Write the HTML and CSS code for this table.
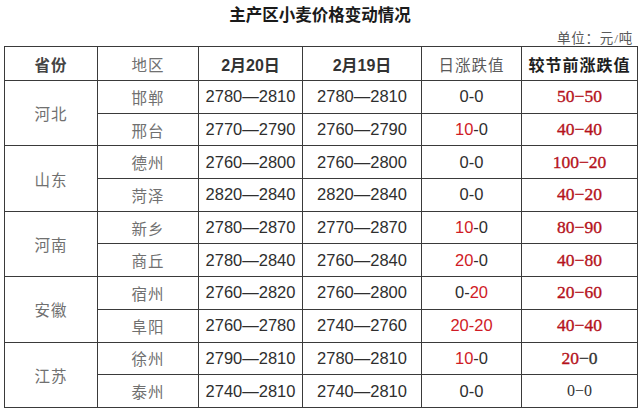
FILE: index.html
```html
<!DOCTYPE html>
<html lang="zh">
<head>
<meta charset="utf-8">
<link rel="stylesheet" href="styles.css">
</head>
<body>
<div class="page">
  <div class="title">主产区小麦价格变动情况</div>
  <div class="unit">单位：元/吨</div>
  <table class="grid">
    <colgroup>
      <col class="c1"><col class="c2"><col class="c3"><col class="c4"><col class="c5"><col class="c6">
    </colgroup>
    <thead>
      <tr class="head">
        <th class="cn bold">省份</th>
        <th class="cn">地区</th>
        <th class="num bold">2月20日</th>
        <th class="num bold">2月19日</th>
        <th class="cn light">日涨跌值</th>
        <th class="cn bold dark">较节前涨跌值</th>
      </tr>
    </thead>
    <tbody>
      <tr>
        <td class="cn prov" rowspan="2">河北</td>
        <td class="cn">邯郸</td>
        <td class="num">2780—2810</td>
        <td class="num">2780—2810</td>
        <td class="num">0-0</td>
        <td class="ser red">50−50</td>
      </tr>
      <tr>
        <td class="cn">邢台</td>
        <td class="num">2770—2790</td>
        <td class="num">2760—2790</td>
        <td class="num"><span class="r">10</span>-0</td>
        <td class="ser red">40−40</td>
      </tr>
      <tr>
        <td class="cn prov" rowspan="2">山东</td>
        <td class="cn">德州</td>
        <td class="num">2760—2800</td>
        <td class="num">2760—2800</td>
        <td class="num">0-0</td>
        <td class="ser red">100−20</td>
      </tr>
      <tr>
        <td class="cn">菏泽</td>
        <td class="num">2820—2840</td>
        <td class="num">2820—2840</td>
        <td class="num">0-0</td>
        <td class="ser red">40−20</td>
      </tr>
      <tr>
        <td class="cn prov" rowspan="2">河南</td>
        <td class="cn">新乡</td>
        <td class="num">2780—2870</td>
        <td class="num">2770—2870</td>
        <td class="num"><span class="r">10</span>-0</td>
        <td class="ser red">80−90</td>
      </tr>
      <tr>
        <td class="cn">商丘</td>
        <td class="num">2780—2840</td>
        <td class="num">2760—2840</td>
        <td class="num"><span class="r">20</span>-0</td>
        <td class="ser red">40−80</td>
      </tr>
      <tr>
        <td class="cn prov" rowspan="2">安徽</td>
        <td class="cn">宿州</td>
        <td class="num">2760—2820</td>
        <td class="num">2760—2800</td>
        <td class="num">0-<span class="r">20</span></td>
        <td class="ser red">20−60</td>
      </tr>
      <tr>
        <td class="cn">阜阳</td>
        <td class="num">2760—2780</td>
        <td class="num">2740—2760</td>
        <td class="num"><span class="r">20-20</span></td>
        <td class="ser red">40−40</td>
      </tr>
      <tr>
        <td class="cn prov" rowspan="2">江苏</td>
        <td class="cn">徐州</td>
        <td class="num">2790—2810</td>
        <td class="num">2780—2810</td>
        <td class="num"><span class="r">10</span>-0</td>
        <td class="ser"><span class="r2">20</span>−0</td>
      </tr>
      <tr>
        <td class="cn">泰州</td>
        <td class="num">2740—2810</td>
        <td class="num">2740—2810</td>
        <td class="num">0-0</td>
        <td class="ser small">0−0</td>
      </tr>
    </tbody>
  </table>
</div>
</body>
</html>
```

FILE: styles.css
```css
html, body {
  margin: 0;
  padding: 0;
  background: #ffffff;
}

.page {
  width: 640px;
  height: 413px;
  overflow: hidden;
}

.title {
  height: 30px;
  padding-top: 2px;
  line-height: 28px;
  text-align: center;
  font-family: "Liberation Serif", "Noto Sans CJK SC", serif;
  font-weight: bold;
  font-size: 16.5px;
  color: #1a1a1a;
}

.unit {
  height: 14px;
  line-height: 14px;
  text-align: right;
  padding-right: 7px;
  font-family: "Liberation Serif", "Noto Sans CJK SC", serif;
  font-size: 13.5px;
  color: #5a5a5a;
  letter-spacing: 0.8px;
}

.grid {
  margin-left: 4px;
  width: 633px;
  border-collapse: collapse;
  table-layout: fixed;
}

.c1 { width: 93px; }
.c2 { width: 101px; }
.c3 { width: 104px; }
.c4 { width: 119px; }
.c5 { width: 100px; }
.c6 { width: 116px; }

.grid th,
.grid td {
  border: 1px solid #3a3a3a;
  padding: 0;
  text-align: center;
  vertical-align: middle;
  white-space: nowrap;
}

.grid tr.head {
  height: 34px;
}

.grid tbody tr {
  height: 32.7px;
}

.cn {
  font-family: "Liberation Serif", "Noto Sans CJK SC", serif;
  font-size: 15.5px;
  font-weight: normal;
  color: #707070;
  letter-spacing: 1px;
}

.cn.bold {
  font-weight: bold;
  color: #444444;
}

.cn.dark {
  color: #1e1e1e;
  font-size: 16px;
}

.cn.light {
  color: #5a5a5a;
}

.num {
  font-family: "Liberation Sans", "Noto Sans CJK SC", sans-serif;
  font-size: 16.5px;
  color: #2e2e2e;
}

.num.bold {
  font-weight: bold;
  font-size: 16px;
  color: #333333;
}

.ser {
  font-family: "Liberation Serif", "Noto Sans CJK SC", serif;
  font-size: 17.5px;
  color: #333333;
  -webkit-text-stroke: 0.35px currentColor;
}

.ser.red {
  color: #b5121b;
}

.ser.small {
  font-size: 16px;
  -webkit-text-stroke: 0;
}

.r {
  color: #d01b26;
}

.r2 {
  color: #b5121b;
}
```
